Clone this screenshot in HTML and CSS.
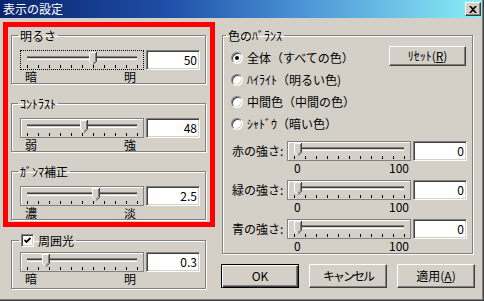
FILE: index.html
```html
<!DOCTYPE html>
<html lang="ja">
  <head>
    <meta charset="UTF-8" />
    <title>表示の設定</title>
    <link rel="stylesheet" href="styles.css">
  </head>
  <body>
    <svg class="defs" width="0" height="0">
      <symbol id="thumb" viewBox="0 0 8 13">
        <path d="M0 0H8V9L4 13L0 9Z" fill="#d4d0c8" />
        <path d="M0.5 9V0.5H7" fill="none" stroke="#fff" />
        <path d="M0.5 9.2L3.8 12.5" fill="none" stroke="#fff" />
        <path d="M7.5 0V9.2L4 12.7" fill="none" stroke="#404040" />
        <path d="M6.5 1V8.8L4 11.3" fill="none" stroke="#808080" />
      </symbol>
    </svg>

    <div class="dialog">
      <div class="titlebar">
        <span class="title">表示の設定</span>
        <span class="close-btn">
          <svg width="8" height="7" viewBox="0 0 8 7"><path d="M0 0H2L4 2L6 0H8L5 3.5L8 7H6L4 5L2 7H0L3 3.5Z" fill="#000" /></svg>
        </span>
      </div>

      <div class="content">
        <div class="left">
          <div class="highlight">
            <fieldset class="group">
              <legend>明るさ</legend>
              <div class="control">
                <div class="slider focus">
                  <div class="track"></div>
                  <div class="ticks"></div>
                  <svg class="thumb" style="left:68px"><use href="#thumb" /></svg>
                </div>
                <div class="edit">50</div>
              </div>
              <div class="scale"><span>暗</span><span>明</span></div>
            </fieldset>

            <fieldset class="group">
              <legend>ｺﾝﾄﾗｽﾄ</legend>
              <div class="control">
                <div class="slider">
                  <div class="track"></div>
                  <div class="ticks"></div>
                  <svg class="thumb" style="left:59px"><use href="#thumb" /></svg>
                </div>
                <div class="edit">48</div>
              </div>
              <div class="scale"><span>弱</span><span>強</span></div>
            </fieldset>

            <fieldset class="group">
              <legend>ｶﾞﾝﾏ補正</legend>
              <div class="control">
                <div class="slider">
                  <div class="track"></div>
                  <div class="ticks"></div>
                  <svg class="thumb" style="left:71px"><use href="#thumb" /></svg>
                </div>
                <div class="edit">2.5</div>
              </div>
              <div class="scale"><span>濃</span><span>淡</span></div>
            </fieldset>
          </div>

          <fieldset class="group ambient">
            <legend>
              <span class="check-label">
                <span class="checkbox">
                  <svg width="7" height="7" viewBox="0 0 7 7"><path d="M0.5 3L2.5 5L6.5 1" fill="none" stroke="#000" stroke-width="1.8" /></svg>
                </span>
                周囲光
              </span>
            </legend>
            <div class="control">
              <div class="slider">
                <div class="track"></div>
                <div class="ticks"></div>
                <svg class="thumb" style="left:21px"><use href="#thumb" /></svg>
              </div>
              <div class="edit">0.3</div>
            </div>
            <div class="scale"><span>暗</span><span>明</span></div>
          </fieldset>
        </div>

        <div class="right">
          <fieldset class="group balance">
            <legend>色のﾊﾞﾗﾝｽ</legend>
            <div class="balance-top">
              <div class="radios">
                <div class="radio checked"><span class="radio-dot"></span>全体（すべての色）</div>
                <div class="radio"><span class="radio-dot"></span>ﾊｲﾗｲﾄ（明るい色)</div>
                <div class="radio"><span class="radio-dot"></span>中間色（中間の色）</div>
                <div class="radio"><span class="radio-dot"></span>ｼｬﾄﾞｳ（暗い色）</div>
              </div>
              <button class="btn reset">ﾘｾｯﾄ(<u>R</u>)</button>
            </div>

            <div class="channels">
              <div class="channel">
                <div class="field">
                  <span class="field-label">赤の強さ:</span>
                  <div class="slider">
                    <div class="track"></div>
                    <div class="ticks"></div>
                    <svg class="thumb" style="left:6px"><use href="#thumb" /></svg>
                  </div>
                  <div class="edit">0</div>
                </div>
                <div class="scale num"><span>0</span><span>100</span></div>
              </div>
              <div class="channel">
                <div class="field">
                  <span class="field-label">緑の強さ:</span>
                  <div class="slider">
                    <div class="track"></div>
                    <div class="ticks"></div>
                    <svg class="thumb" style="left:6px"><use href="#thumb" /></svg>
                  </div>
                  <div class="edit">0</div>
                </div>
                <div class="scale num"><span>0</span><span>100</span></div>
              </div>
              <div class="channel">
                <div class="field">
                  <span class="field-label">青の強さ:</span>
                  <div class="slider">
                    <div class="track"></div>
                    <div class="ticks"></div>
                    <svg class="thumb" style="left:6px"><use href="#thumb" /></svg>
                  </div>
                  <div class="edit">0</div>
                </div>
                <div class="scale num"><span>0</span><span>100</span></div>
              </div>
            </div>
          </fieldset>

          <div class="buttons">
            <button class="btn default">OK</button>
            <button class="btn"><span class="narrow">キャンセル</span></button>
            <button class="btn">適用(<u>A</u>)</button>
          </div>
        </div>
      </div>
    </div>
  </body>
</html>
```

FILE: styles.css
```css
:root {
  --face: #d4d0c8;
  --shadow: #808080;
  --dark: #404040;
  --light: #ffffff;
}
body {
  margin: 0;
  font-family: "Noto Sans CJK JP", "Noto Sans", sans-serif;
  font-size: 12px;
  line-height: 14px;
  color: #000;
  background-color: var(--face);
}
.defs {
  position: absolute;
}
.dialog {
  width: 484px;
  height: 301px;
  box-sizing: border-box;
  background-color: var(--face);
  border-right: 1px solid var(--dark);
  border-bottom: 1px solid var(--dark);
  box-shadow: inset -1px -1px var(--shadow);
}
.titlebar {
  height: 18px;
  margin-right: 1px;
  padding: 0 1px 0 3px;
  display: flex;
  align-items: center;
  justify-content: space-between;
  background: linear-gradient(to right, #0a246a 0%, #1f4fa8 35%, #4f9ad8 65%, #8ceef6 100%);
  color: #fff;
}
.title {
  font-size: 12px;
  line-height: 18px;
}
.close-btn {
  width: 16px;
  height: 14px;
  box-sizing: border-box;
  display: flex;
  align-items: center;
  justify-content: center;
  background-color: var(--face);
  border: 1px solid;
  border-color: var(--light) var(--dark) var(--dark) var(--light);
  box-shadow: inset -1px -1px var(--shadow);
}
.content {
  display: flex;
  padding-left: 3px;
}
.left {
  width: 212px;
  display: flex;
  flex-direction: column;
}
.highlight {
  margin-top: 4px;
  height: 205px;
  box-sizing: border-box;
  border: 5px solid #ff0000;
  padding: 1px 0 0 3px;
  display: flex;
  flex-direction: column;
  gap: 12px;
}

/* group boxes */
.group {
  margin: 0;
  padding: 0;
  min-width: 0;
  width: 195px;
  box-sizing: border-box;
  border: 1px solid var(--shadow);
  box-shadow: inset 1px 1px var(--light), 1px 1px var(--light);
}
.group legend {
  margin-left: 6px;
  padding: 0 2px;
  height: 15px;
  line-height: 15px;
}
.group > .control {
  margin-top: 7px;
}
.control {
  display: flex;
  gap: 2px;
  padding-left: 8px;
}
.scale {
  width: 124px;
  height: 13px;
  line-height: 13px;
  box-sizing: border-box;
  margin-left: 8px;
  padding: 0 8px 0 5px;
  display: flex;
  justify-content: space-between;
}
.ambient {
  margin: 6px 0 0 8px;
  padding-bottom: 3px;
}
.ambient legend {
  margin-left: 7px;
}
.ambient > .control {
  margin-top: 4px;
}
.check-label {
  display: flex;
  align-items: center;
  gap: 4px;
}
.checkbox {
  width: 13px;
  height: 13px;
  box-sizing: border-box;
  display: flex;
  align-items: center;
  justify-content: center;
  background-color: #fff;
  border: 1px solid;
  border-color: var(--shadow) var(--light) var(--light) var(--shadow);
  box-shadow: inset 1px 1px var(--dark), inset -1px -1px var(--face);
}

/* trackbar */
.slider {
  position: relative;
  width: 124px;
  height: 20px;
  box-sizing: border-box;
  border: 1px solid var(--shadow);
  box-shadow: inset 1px 1px var(--light);
}
.slider.focus {
  border: 1px dotted #000;
  box-shadow: none;
}
.track {
  position: absolute;
  left: 6px;
  right: 6px;
  top: 5px;
  height: 4px;
  box-sizing: border-box;
  border-top: 1px solid var(--shadow);
  border-bottom: 1px solid var(--light);
  background: linear-gradient(var(--dark) 0 1px, var(--face) 1px);
}
.ticks {
  position: absolute;
  left: 6px;
  top: 14px;
  width: 111px;
  height: 3px;
  background: repeating-linear-gradient(to right, #000 0 1px, transparent 1px 11px);
}
.thumb {
  position: absolute;
  top: 1px;
  width: 8px;
  height: 13px;
}
.edit {
  width: 54px;
  height: 20px;
  box-sizing: border-box;
  padding: 0 2px;
  line-height: 18px;
  text-align: right;
  background-color: #fff;
  border: 1px solid;
  border-color: var(--shadow) var(--light) var(--light) var(--shadow);
  box-shadow: inset 1px 1px var(--dark), inset -1px -1px var(--face);
}

/* color balance */
.right {
  width: 254px;
  margin-left: 6px;
  display: flex;
  flex-direction: column;
}
.balance {
  width: 251px;
  margin: 10px 0 0 1px;
  padding-bottom: 1px;
}
.balance legend {
  margin-left: 3px;
}
.balance-top {
  display: flex;
  align-items: flex-start;
}
.radios {
  flex: 1;
  padding: 4px 0 0 8px;
}
.radio {
  height: 22px;
  display: flex;
  align-items: center;
  gap: 4px;
}
.radio-dot {
  position: relative;
  width: 12px;
  height: 12px;
  box-sizing: border-box;
  border-radius: 50%;
  background-color: #fff;
  border: 1px solid;
  border-color: var(--shadow) var(--light) var(--light) var(--shadow);
  box-shadow: inset 1px 1px var(--dark), inset -1px -1px var(--face);
}
.radio.checked .radio-dot::after {
  content: "";
  position: absolute;
  left: 3px;
  top: 3px;
  width: 4px;
  height: 4px;
  border-radius: 50%;
  background-color: #000;
}
.btn {
  font-family: inherit;
  font-size: 12px;
  line-height: 14px;
  color: #000;
  padding: 0;
  background-color: var(--face);
  border: 1px solid;
  border-color: var(--light) var(--dark) var(--dark) var(--light);
  box-shadow: inset -1px -1px var(--shadow);
  border-radius: 0;
}
.narrow {
  letter-spacing: -2px;
}
.reset {
  width: 77px;
  height: 20px;
  margin: 3px 6px 0 0;
}
.channels {
  margin-top: 6px;
  display: flex;
  flex-direction: column;
  gap: 6px;
}
.field {
  display: flex;
  align-items: center;
  gap: 2px;
}
.field-label {
  width: 53px;
  padding-left: 9px;
}
.scale.num {
  margin-left: 64px;
  padding: 0 2px 0 7px;
}
.buttons {
  margin-top: 10px;
  display: flex;
  justify-content: space-between;
}
.buttons .btn {
  width: 78px;
  height: 24px;
}
.btn.default {
  outline: 1px solid #000;
  outline-offset: -1px;
  border-color: #000;
  box-shadow: inset 1px 1px var(--light), inset -1px -1px var(--dark), inset -2px -2px var(--shadow);
}
```
